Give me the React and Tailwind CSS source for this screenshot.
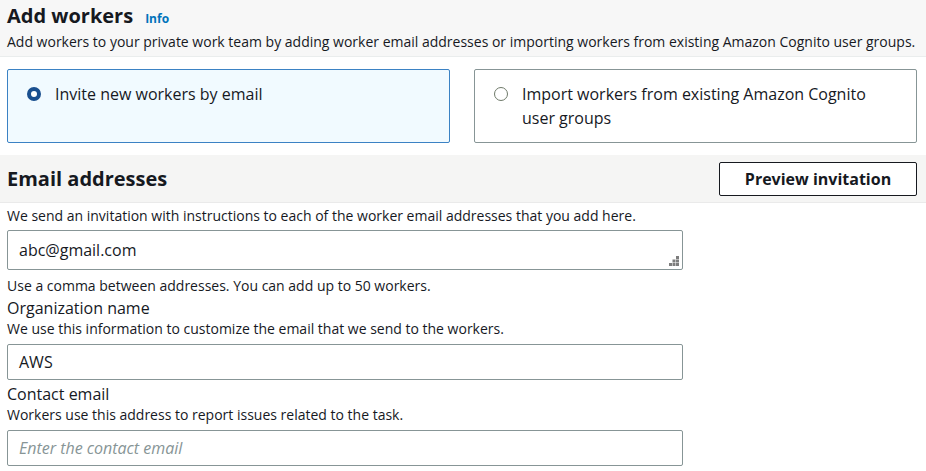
import React from 'react';

const font = { fontFamily: '"Open Sans", "Liberation Sans", sans-serif' };

const RadioCard = ({ selected, children }) => (
  <div
    className={`flex-1 flex items-start gap-[14px] rounded-[2px] border px-[19px] pt-[12px] pb-[12px] h-[74px] ${
      selected ? 'bg-[#f1faff] border-[#3b82c4]' : 'bg-white border-[#879596]'
    }`}
  >
    {selected ? (
      <span className="mt-[5px] w-[14px] h-[14px] rounded-full border-[4px] border-[#1a4f8f] bg-white shrink-0" />
    ) : (
      <span className="mt-[5px] w-[14px] h-[14px] rounded-full border border-[#6f7a6a] bg-white shrink-0" />
    )}
    <span className="text-[16px] leading-[24px] text-[#16191f]">{children}</span>
  </div>
);

const Field = ({ label, hint, children }) => (
  <div className="flex flex-col">
    {label && <div className="text-[16px] leading-[22px] text-[#16191f]">{label}</div>}
    {hint && <div className="text-[14px] leading-[20px] text-[#16191f]">{hint}</div>}
    {children}
  </div>
);

export default function App() {
  return (
    <div className="w-[926px] h-[471px] bg-white overflow-hidden text-[#16191f]" style={font}>
      {/* Add workers header */}
      <div className="bg-[#f7f7f7] border-b border-[#eaeded] px-[7px] pt-[2px] h-[57px]">
        <div className="flex items-baseline gap-[12px]">
          <h1 className="text-[20px] leading-[28px] font-bold">Add workers</h1>
          <a className="text-[12px] font-bold text-[#0073bb]">Info</a>
        </div>
        <p className="text-[14px] leading-[20px] mt-[2px]">
          Add workers to your private work team by adding worker email addresses or importing workers from existing Amazon Cognito user groups.
        </p>
      </div>

      {/* Choice cards */}
      <div className="flex gap-[24px] px-[7px] pr-[9px] pt-[12px]">
        <RadioCard selected>Invite new workers by email</RadioCard>
        <RadioCard>
          Import workers from existing Amazon Cognito
          <br />
          user groups
        </RadioCard>
      </div>

      {/* Email addresses header */}
      <div className="mt-[12px] bg-[#f5f5f4] border-b border-[#eaeaea] h-[48px] flex items-center justify-between px-[7px] pr-[9px]">
        <h2 className="text-[20px] leading-[28px] font-bold">Email addresses</h2>
        <button className="w-[198px] h-[34px] border border-[#16191f] rounded-[2px] bg-white text-[16px] font-bold">
          Preview invitation
        </button>
      </div>

      <div className="px-[7px] w-[690px] flex flex-col">
        <p className="text-[14px] leading-[20px] mt-[3px]">
          We send an invitation with instructions to each of the worker email addresses that you add here.
        </p>
        <div className="relative mt-[4px] h-[40px] border border-[#879596] rounded-[2px] bg-white px-[11px] flex items-center text-[16px]">
          abc@gmail.com
          {/* resize grip */}
          <svg className="absolute right-[3px] bottom-[3px]" width="10" height="10" viewBox="0 0 10 10" fill="#7d7d7d">
            <rect x="7" y="0" width="3" height="3" />
            <rect x="3.5" y="3.5" width="3" height="3" />
            <rect x="7" y="3.5" width="3" height="3" />
            <rect x="0" y="7" width="3" height="3" />
            <rect x="3.5" y="7" width="3" height="3" />
            <rect x="7" y="7" width="3" height="3" />
          </svg>
        </div>
        <p className="text-[14px] leading-[20px] mt-[6px]">Use a comma between addresses. You can add up to 50 workers.</p>

        <div className="mt-[1px]">
          <Field label="Organization name" hint="We use this information to customize the email that we send to the workers.">
            <div className="mt-[5px] h-[36px] border border-[#879596] rounded-[2px] bg-white px-[11px] flex items-center text-[16px]">
              AWS
            </div>
          </Field>
        </div>

        <div className="mt-[3px]">
          <Field label="Contact email" hint="Workers use this address to report issues related to the task.">
            <div className="mt-[5px] h-[36px] border border-[#879596] rounded-[2px] bg-white px-[11px] flex items-center text-[16px] italic text-[#879596]">
              Enter the contact email
            </div>
          </Field>
        </div>
      </div>
    </div>
  );
}
